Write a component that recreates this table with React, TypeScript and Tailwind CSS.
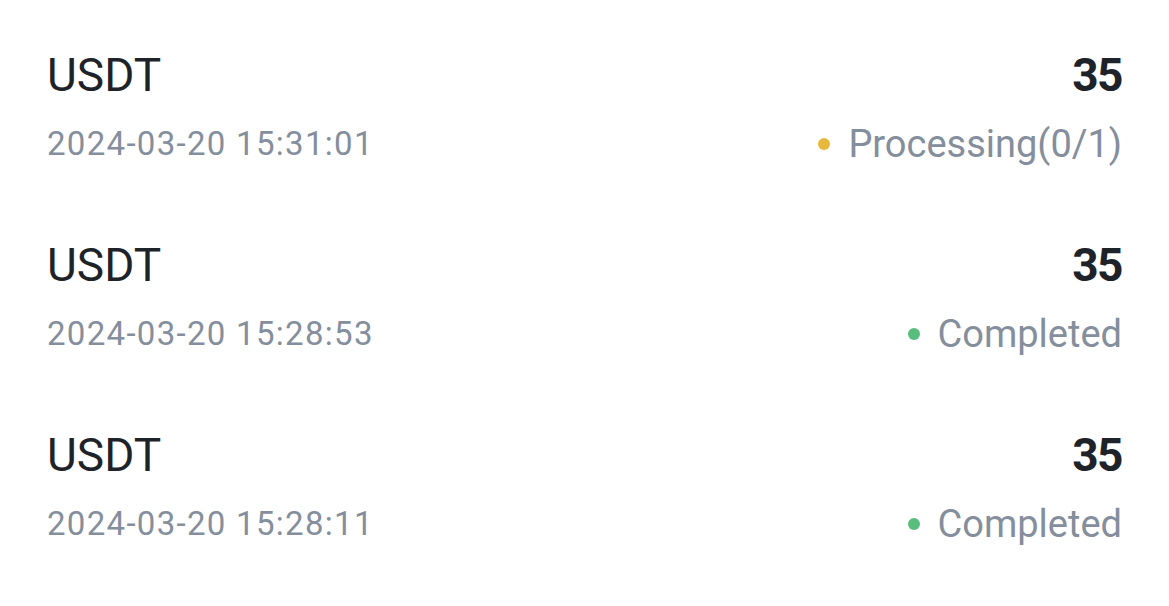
const rows = [
  { coin: 'USDT', time: '2024-03-20 15:31:01', amount: '35', status: 'Processing(0/1)', dot: 'bg-[#e6b93c]' },
  { coin: 'USDT', time: '2024-03-20 15:28:53', amount: '35', status: 'Completed', dot: 'bg-[#58bd7d]' },
  { coin: 'USDT', time: '2024-03-20 15:28:11', amount: '35', status: 'Completed', dot: 'bg-[#58bd7d]' },
]

export default function App() {
  return (
    <div className="h-[606px] w-[1169px] bg-white px-[47px] pt-[47px] font-['Roboto',sans-serif]">
      <div className="flex flex-col gap-[73px]">
        {rows.map((r, i) => (
          <div key={i} className="flex items-start justify-between">
            <div className="flex flex-col gap-[21px]">
              <span className="text-[46px] leading-[56px] text-[#1e2329]">{r.coin}</span>
              <span className="text-[33px] leading-[40px] tracking-[1.3px] text-[#848e9c]">{r.time}</span>
            </div>
            <div className="flex flex-col items-end gap-[21px]">
              <span className="text-[46px] font-bold leading-[56px] tracking-[-1.5px] text-[#1e2329]">{r.amount}</span>
              <span className="flex items-center gap-[18px] text-[38px] leading-[40px] text-[#848e9c]">
                <span className={`h-[12px] w-[12px] rounded-full ${r.dot}`} />
                {r.status}
              </span>
            </div>
          </div>
        ))}
      </div>
    </div>
  )
}
